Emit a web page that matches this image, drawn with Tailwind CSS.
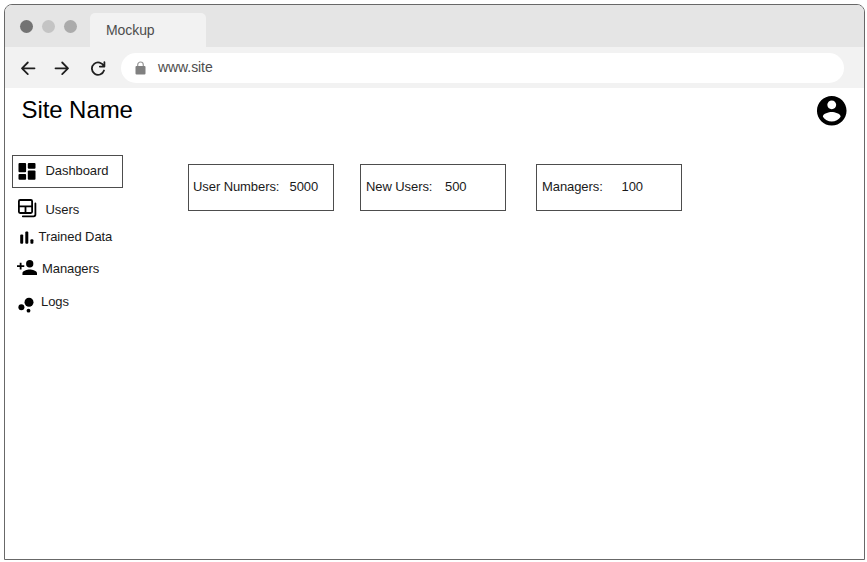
<!DOCTYPE html>
<html lang="en">
<head>
<meta charset="utf-8">
<title>Mockup</title>
<script src="https://cdn.jsdelivr.net/npm/@tailwindcss/browser@4"></script>
</head>
<body class="h-[562px] overflow-hidden bg-white pt-1 pl-1 font-['Liberation_Sans',Arial,sans-serif] text-[13px] leading-4 tracking-[-0.08px] text-[#1a1a1a]">
<div class="flex h-[556px] w-[861px] flex-col overflow-hidden rounded-t-lg border border-[#686868] bg-white">
  <div class="flex h-[42px] shrink-0 items-start bg-[#e5e5e5] pl-[15px]">
    <div class="mt-[15px] flex gap-[9px]">
      <span class="size-[13px] rounded-full bg-[#737373]"></span>
      <span class="size-[13px] rounded-full bg-[#c4c4c4]"></span>
      <span class="size-[13px] rounded-full bg-[#ababab]"></span>
    </div>
    <div class="mt-2 ml-[13px] h-[34px] w-[116px] rounded-t-[5px] bg-[#f2f2f2] pt-[9px] pl-[16px] text-sm leading-4 text-[#4d4d4d]">Mockup</div>
  </div>
  <div class="flex h-[41px] shrink-0 items-center bg-[#f2f2f2] pl-[15px]">
    <svg class="h-[16px] w-[16px]" viewBox="0 0 16 16" fill="none" stroke="#1f1f1f" stroke-width="1.8" stroke-linecap="round" stroke-linejoin="round"><path d="M14.500 8.300H2M7.800 2.500L2 8.300l5.800 5.800"/></svg>
    <svg class="ml-[18px] h-[16px] w-[16px]" viewBox="0 0 16 16" fill="none" stroke="#1f1f1f" stroke-width="1.8" stroke-linecap="round" stroke-linejoin="round"><path d="M1.500 8.300H14M8.200 2.500L14 8.300l-5.800 5.800"/></svg>
    <svg class="ml-5 h-[16px] w-[16px]" viewBox="0 0 16 16" fill="none" stroke="#1f1f1f" stroke-width="1.8" stroke-linecap="round" stroke-linejoin="round"><path d="M13.800 6.200A6.200 6.200 0 1 0 14 10.500M14.400 2.200v4.400H9.800"/></svg>
    <div class="ml-[15px] flex h-[30px] w-[723px] items-center rounded-full bg-white pl-[14px] text-sm leading-4 text-[#4d4d4d]">
      <svg class="h-[14px] w-[11px]" viewBox="0 0 11 14"><path d="M2.700 6V3.800a2.800 2.800 0 0 1 5.600 0V6" fill="none" stroke="#999" stroke-width="1.200"/><rect x=".5" y="5" width="10" height="8.500" rx="1" fill="#808080"/></svg>
      <span class="-mt-0.5 ml-3">www.site</span>
    </div>
  </div>
  <header class="flex h-[67px] shrink-0 items-start justify-between pr-[15px] pl-[16.5px] text-black">
    <h1 class="mt-2 text-2xl leading-7">Site Name</h1>
    <svg class="mt-[5px] h-[35.5px] w-[35.5px]" viewBox="0 0 24 24"><path d="M12 2C6.480 2 2 6.480 2 12s4.480 10 10 10 10-4.480 10-10S17.520 2 12 2zm0 3c1.660 0 3 1.340 3 3s-1.340 3-3 3-3-1.340-3-3 1.340-3 3-3zm0 14.200c-2.500 0-4.710-1.280-6-3.220.030-1.990 4-3.080 6-3.080 1.990 0 5.970 1.090 6 3.080-1.290 1.940-3.500 3.220-6 3.220z"/></svg>
  </header>
  <div class="flex">
    <nav class="ml-[7px] flex w-[111px] shrink-0 flex-col">
      <div class="flex h-[33px] w-[111px] items-center border border-[#4d4d4d] pl-[5px]">
        <svg class="size-[18px]" viewBox="0 0 18 18"><rect x=".5" y="0" width="7.600" height="9.200" rx="1"/><rect x="9.800" y="0" width="7.700" height="5.700" rx="1"/><rect x=".5" y="11" width="7.600" height="5.800" rx="1"/><rect x="9.800" y="7.500" width="7.700" height="9.300" rx="1"/></svg>
        <span class="-mt-px ml-[9.5px]">Dashboard</span>
      </div>
      <div class="mt-[10px] flex h-[20px] items-start pl-[6px]">
        <svg class="h-[20px] w-[19px]" viewBox="0 0 19 20" fill="none" stroke="#000" stroke-width="1.800" stroke-linecap="round"><rect x=".9" y="2" width="13.200" height="13" rx="1.200"/><path d="M1 8.300h13M7.500 8.300v6.400M17.400 5.500v11.100a1.700 1.700 0 0 1-1.700 1.700H4.800"/></svg>
        <span class="mt-[4px] ml-[8.5px]">Users</span>
      </div>
      <div class="mt-[10px] flex h-[18px] items-start pl-2">
        <svg class="mt-[3px] h-[14px] w-[15px]" viewBox="0 0 15 14"><rect x=".2" y="3.500" width="3" height="9.300" rx="1"/><rect x="5.300" y=".6" width="3" height="12.200" rx="1"/><rect x="10.400" y="8.300" width="3" height="4.500" rx="1"/></svg>
        <span class="mt-px ml-[3.5px] whitespace-nowrap">Trained Data</span>
      </div>
      <div class="mt-[13px] flex h-[20px] items-start pl-[5px]">
        <svg class="mt-[0.5px] h-[15px] w-[20px]" viewBox="0 0 22 16" preserveAspectRatio="none"><path d="M14 8a4 4 0 1 0 0-8 4 4 0 0 0 0 8zM5 10V7.500h3v-2H5V3H3v2.500H0v2h3V10zM14 10c-2.670 0-8 1.340-8 4v2h16v-2c0-2.660-5.330-4-8-4z"/></svg>
        <span class="mt-[2px] ml-[5px]">Managers</span>
      </div>
      <div class="mt-[13px] flex h-[20px] items-start pl-[6px]">
        <svg class="mt-[5px] h-[16px] w-[17px]" viewBox="0 0 17 16"><circle cx="3.400" cy="10.300" r="3"/><circle cx="11" cy="5.300" r="4.500"/><circle cx="10.500" cy="13.700" r="1.900"/></svg>
        <span class="mt-[2px] ml-[6px]">Logs</span>
      </div>
    </nav>
    <main class="mt-[9px] ml-[65px] flex">
      <section class="flex h-[47px] w-[146px] items-center border border-[#4d4d4d] pb-0.5 pl-[4px]"><span class="w-[96.5px]">User Numbers:</span><span>5000</span></section>
      <section class="ml-[26px] flex h-[47px] w-[146px] items-center border border-[#4d4d4d] pb-0.5 pl-[5px]"><span class="w-[79px]">New Users:</span><span>500</span></section>
      <section class="ml-[30px] flex h-[47px] w-[146px] items-center border border-[#4d4d4d] pb-0.5 pl-[5px]"><span class="w-[79.5px]">Managers:</span><span>100</span></section>
    </main>
  </div>
</div>
</body>
</html>
